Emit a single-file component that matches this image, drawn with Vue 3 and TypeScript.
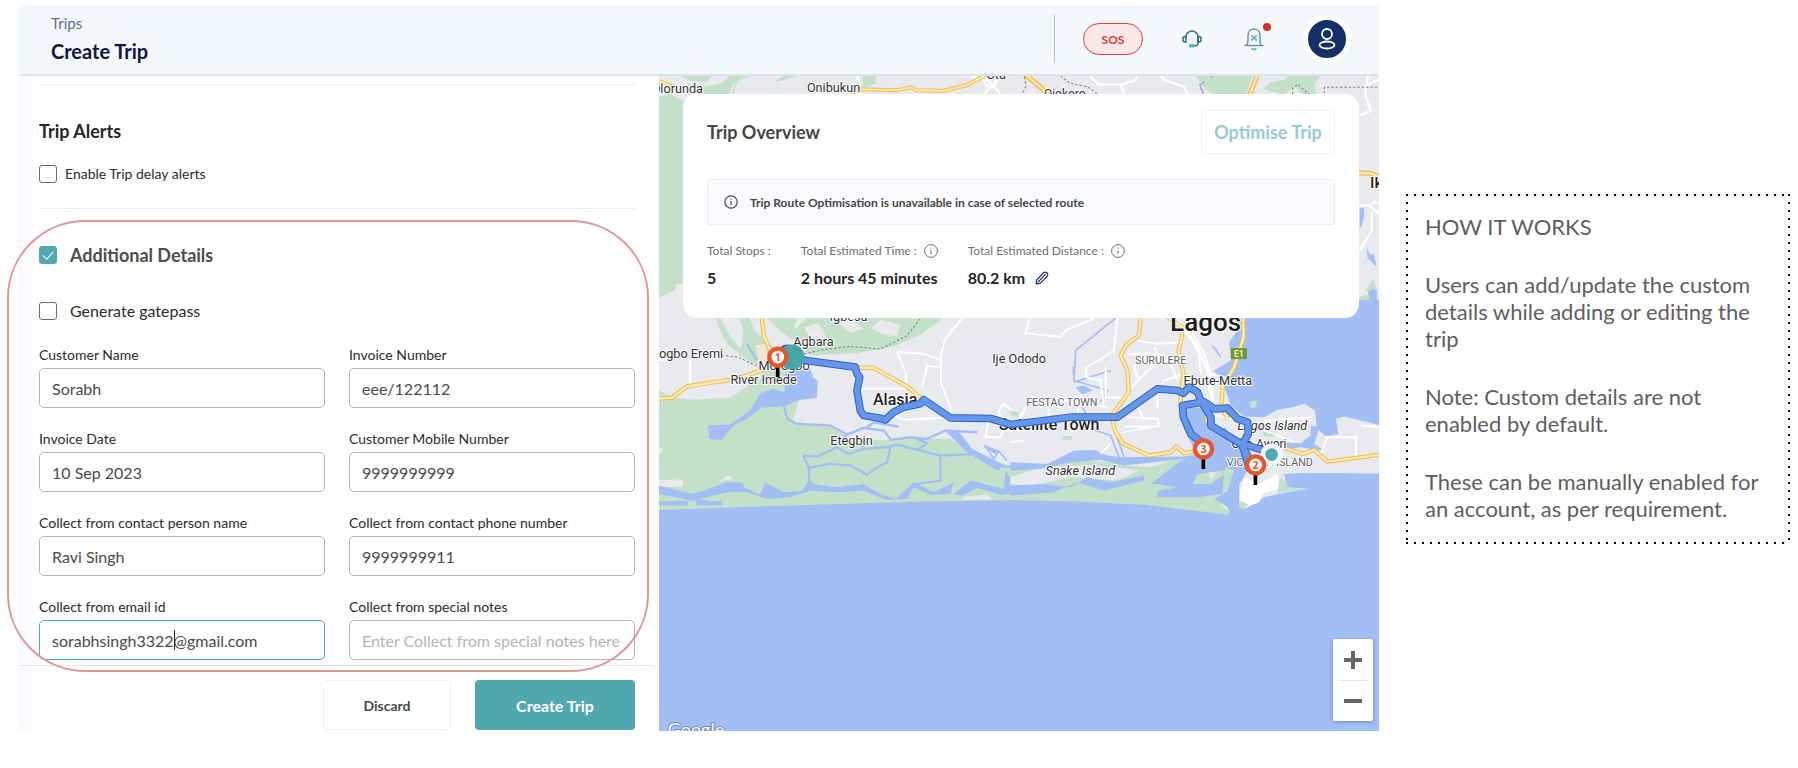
<script setup lang="ts">
import { reactive, ref } from 'vue'

interface Field {
  id: string
  label: string
  value: string
  type?: string
  placeholder?: string
  active?: boolean
}

interface MapLabel {
  text: string
  x: number
  y: number
  size: number
  kind?: string
}

interface Pin {
  n: number
  x: number
  y: number
}

const delayAlerts = ref(false)
const additional = ref(true)
const gatepass = ref(false)

const fields = reactive<Field[]>([
  { id: 'customer-name', label: 'Customer Name', value: 'Sorabh' },
  { id: 'invoice-number', label: 'Invoice Number', value: 'eee/122112' },
  { id: 'invoice-date', label: 'Invoice Date', value: '10 Sep 2023' },
  { id: 'customer-mobile', label: 'Customer Mobile Number', value: '9999999999', type: 'tel' },
  { id: 'contact-name', label: 'Collect from contact person name', value: 'Ravi Singh' },
  { id: 'contact-phone', label: 'Collect from contact phone number', value: '9999999911', type: 'tel' },
  { id: 'contact-email', label: 'Collect from email id', value: 'sorabhsingh3322@gmail.com', active: true },
  {
    id: 'special-notes',
    label: 'Collect from special notes',
    value: '',
    placeholder: 'Enter Collect from special notes here',
  },
])

const labels: MapLabel[] = [
  { text: 'Olorunda', x: -22, y: 52, size: 38 },
  { text: 'Onibukun', x: 443, y: 49, size: 38 },
  { text: 'Ota', x: 980, y: 8, size: 38 },
  { text: 'Ojokoro', x: 1153, y: 66, size: 36 },
  { text: 'Ikorodu', x: 2130, y: 336, size: 46, kind: 'strong' },
  { text: 'Igbesu', x: 511, y: 734, size: 38 },
  { text: 'Agbara', x: 402, y: 808, size: 38 },
  { text: 'ogbo Eremi', x: 0, y: 845, size: 38 },
  { text: 'Morogbo', x: 298, y: 880, size: 38 },
  { text: 'River Imede', x: 214, y: 923, size: 38 },
  { text: 'Etegbin', x: 513, y: 1106, size: 38 },
  { text: 'Alasia', x: 641, y: 984, size: 48, kind: 'strong' },
  { text: 'Ije Ododo', x: 998, y: 859, size: 38 },
  { text: 'Satellite Town', x: 1018, y: 1059, size: 48, kind: 'strong' },
  { text: 'FESTAC TOWN', x: 1100, y: 988, size: 32, kind: 'area' },
  { text: 'SURULERE', x: 1426, y: 864, size: 32, kind: 'area' },
  { text: 'Ebute-Metta', x: 1571, y: 927, size: 38 },
  { text: 'Lagos', x: 1531, y: 764, size: 78, kind: 'strong' },
  { text: 'Snake Island', x: 1158, y: 1195, size: 38, kind: 'isle' },
  { text: 'Lagos Island', x: 1733, y: 1059, size: 38, kind: 'isle' },
  { text: 'Oko-Awori', x: 1715, y: 1115, size: 36 },
  { text: 'VICTORIA ISLAND', x: 1701, y: 1169, size: 32, kind: 'area' },
]

const pins: Pin[] = [
  { n: 1, x: 356, y: 842 },
  { n: 2, x: 1787, y: 1165 },
  { n: 3, x: 1631, y: 1117 },
]

const route =
  'M423 850L588 872L593 892L601 902L593 942L603 1002L613 1017L663 1025L678 1030L703 1007L733 992L783 982L793 970L873 1024L993 1026L1053 1044L1113 1037L1233 1022L1373 1022L1493 937L1553 942L1571 950L1588 932L1613 947L1625 977L1653 1022L1653 1047L1743 1102L1770 1150'
const routeLoop =
  'M1628 1100L1593 1072L1571 1022L1568 987L1633 976L1663 997L1703 995L1733 1027L1763 1037L1765 1072L1748 1102L1813 1122L1835 1134'
</script>

<template>
  <div class="page">
    <div class="app">
      <header class="topbar">
        <div class="crumbs">
          <a class="crumb" href="#trips">Trips</a>
          <h1>Create Trip</h1>
        </div>
        <div class="actions">
          <button class="sos" type="button">SOS</button>
          <button class="icon-btn headset" type="button" aria-label="Support">
            <svg width="20" height="20" viewBox="0 0 20 20" fill="none" stroke="#2f6f85" stroke-width="1.5" stroke-linecap="round">
              <path d="M4 8a6 6 0 0 1 12 0v6c0 2-1.500 3-4 3" />
              <path d="M4 7.500H3a2 2 0 0 0-2 2v1.500a2 2 0 0 0 2 2h1zM16 7.500h1a2 2 0 0 1 2 2v1.500a2 2 0 0 1-2 2h-1z" />
              <rect x="7.500" y="15.800" width="4.500" height="2" rx="1" fill="#4fb3c6" stroke="#4fb3c6" />
            </svg>
          </button>
          <button class="icon-btn bell" type="button" aria-label="Notifications">
            <svg width="22" height="24" viewBox="0 0 22 24" fill="none" stroke="#6f8fae" stroke-width="1.500" stroke-linecap="round" stroke-linejoin="round">
              <path d="M2 18.500h18M4 18c1-1.500 1-3 1-5V8c0-3.500 2.500-6 6-6s6 2.500 6 6v5c0 2 0 3.500 1 5" />
              <path d="M8.700 8.500l4.600 4.600M13.300 8.500l-4.600 4.600M9 21.500c1 1.300 3 1.300 4 0" stroke="#4fb3c6" />
            </svg>
            <span class="badge"></span>
          </button>
          <button class="avatar" type="button" aria-label="Account">
            <svg width="20" height="24" viewBox="0 0 20 24" fill="none" stroke="#fff" stroke-width="1.800">
              <circle cx="10" cy="7" r="5" />
              <ellipse cx="10" cy="18" rx="7.500" ry="3.500" />
            </svg>
          </button>
        </div>
      </header>

      <main class="body">
        <form class="panel" @submit.prevent>
          <div class="fields-area">
            <section class="alerts">
              <h2>Trip Alerts</h2>
              <label class="check small">
                <input v-model="delayAlerts" type="checkbox" />
                <span>Enable Trip delay alerts</span>
              </label>
            </section>

            <section class="details">
              <div class="highlight"></div>
              <label class="check title">
                <input v-model="additional" type="checkbox" />
                <span>Additional Details</span>
              </label>
              <label class="check gate">
                <input v-model="gatepass" type="checkbox" />
                <span>Generate gatepass</span>
              </label>
              <div class="grid">
                <div v-for="f in fields" :key="f.id" class="field">
                  <label :for="f.id">{{ f.label }}</label>
                  <input
                    :id="f.id"
                    v-model="f.value"
                    :type="f.type ?? 'text'"
                    :placeholder="f.placeholder"
                    :class="{ active: f.active }"
                  />
                  <span v-if="f.active" class="caret"></span>
                </div>
              </div>
            </section>
          </div>
          <footer class="foot">
            <button class="discard" type="button">Discard</button>
            <button class="create" type="submit">Create Trip</button>
          </footer>
        </form>

        <section class="map" aria-label="Route map">
          <svg class="canvas" viewBox="0 0 2160 1962" preserveAspectRatio="xMinYMin slice">
            <rect width="2160" height="1962" fill="#e8eaed" />

            <!-- northern strip, above the overview card -->
            <g transform="translate(-27 -18)">
              <g fill="#c3e1c8">
                <path d="M27 80L60 72L100 92V640L80 640L75 660L27 682ZM90 18H185L170 36L120 32ZM130 72L165 50L215 40L235 18H300L250 40L235 72ZM370 36L400 18H440L400 30ZM636 18H676V40L650 52L636 50Z" />
              </g>
              <path d="M265 18L248 72" stroke="#c3e1c8" stroke-width="6" />
              <g fill="none" stroke="#fff" stroke-width="6">
                <path d="M620 18L630 40L622 55M960 18L1010 30L1050 72M1040 20L1030 45L1000 72M1000 30a20 20 0 1 0 40 0" />
              </g>
              <g fill="none" stroke="#f3bc4b" stroke-width="12">
                <path d="M27 33L70 50M590 72L630 58L740 61L780 52L800 61L880 62L950 45L1005 16M1122 14L1200 78" />
              </g>
              <g fill="none" stroke="#fdeab8" stroke-width="6">
                <path d="M27 33L70 50M590 72L630 58L740 61L780 52L800 61L880 62L950 45L1005 16M1122 14L1200 78" />
              </g>
              <path d="M1122 20L1126 50L1114 72" fill="none" stroke="#7a7d82" stroke-width="3" stroke-dasharray="8 6" />
            </g>
            <g transform="translate(1023 -18)">
              <g fill="#c3e1c8">
                <path d="M583 15H755L735 74H640L612 55ZM785 58L810 36L850 30L862 15H960L940 45L945 74H905L880 50L850 74ZM1116 625L1128 662L1093 662ZM1076 680L1110 672L1120 690L1100 700L1076 690Z" />
              </g>
              <g fill="none" stroke="#fff" stroke-width="7">
                <path d="M265 15L295 44L360 44L370 74M360 44L405 30L410 15M480 15L490 30L550 50L560 74M1100 18L1092 72L1109 122L1078 135M1135 28L1096 45M1076 405L1105 406L1120 395L1135 400M1105 406L1135 432M1112 425V480L1076 540" />
              </g>
              <g fill="#a2bff5">
                <path d="M1076 415L1088 412L1090 435L1080 472L1076 470ZM1096 530L1108 555L1118 550L1126 590L1112 575L1100 565ZM1100 665L1116 655L1128 662V690H1106ZM1076 690L1137 690V800H1076Z" />
                <path d="M628 18L635 22M612 36L597 44L608 72" fill="none" stroke="#7fa8f2" stroke-width="4" />
              </g>
              <g fill="none" stroke="#f3bc4b" stroke-width="15">
                <path d="M770 14L745 78M1070 308L1110 310L1140 322M76 14L130 60" />
              </g>
              <g fill="none" stroke="#fdeab8" stroke-width="7">
                <path d="M770 14L745 78M1070 308L1110 310L1140 322M76 14L130 60" />
              </g>
              <g fill="none" stroke="#7a7d82" stroke-width="3" stroke-dasharray="7 6">
                <path d="M180 18L208 40L260 50L292 72M875 72V55L890 43L926 74M970 70V52H1137" />
              </g>
            </g>

            <!-- western half: creeks and coast -->
            <g transform="translate(-27 702)">
              <g fill="#c3e1c8">
                <path d="M27 240L75 262L130 268L240 262L325 205L390 195L420 190L450 260L425 335L450 335L550 352L600 385L700 388L800 385L900 385L940 410L1000 430L1080 470L1130 500V600L27 600Z" />
                <path d="M195 24H335L350 90L385 130L345 175L300 155L235 105L215 70Z" />
                <path d="M350 24H880L810 72L730 108L620 128L480 135L440 95L400 70L370 40Z" />
                <path d="M330 180L420 170L430 200L350 205Z" />
              </g>
              <g fill="#e8eaed">
                <path d="M212 24H268L280 60L272 116L240 80ZM300 24L330 24L335 80L312 60ZM560 34L600 24L640 55L600 68ZM460 50L505 38L528 80L520 98L480 82ZM660 55L690 28L750 44L740 78L700 72ZM440 24L470 24L430 60ZM27 415L42 410L32 432L27 432ZM27 508L100 507L98 528L27 528ZM205 512L235 495L250 505ZM940 558L1010 552L1030 566L935 568Z" />
              </g>
              <path d="M315 105L345 100L360 165L330 160Z" fill="#f6e5d3" />
              <g fill="#a2bff5">
                <path d="M405 187L480 172L488 200L503 212L500 262L440 270L405 287L335 292L290 325L250 345L215 388L178 385L173 345L240 342L300 300L330 248L370 235L403 245Z" />
                <path d="M27 598L400 585L830 572L1140 568V1300H27ZM27 525L130 550L230 515L275 515L285 532L330 552L345 515L400 545L455 540L478 505L490 520L560 530L640 520L690 550L735 565L790 515L850 545L910 515L900 550L840 552L790 530L770 565L710 568L640 540L560 545L480 540L420 560L350 565L290 545L230 545L130 570L27 550ZM27 572L112 570L115 585L27 584ZM138 562L180 572L215 570V584L138 584ZM910 550L960 510L1060 535L1065 480L1110 550L1050 552L980 532L935 555ZM880 358L925 362L965 415L1060 465L1040 480L950 425ZM998 402L1045 420L1035 430L1005 415Z" />
              </g>
              <g fill="none" stroke="#a2bff5" stroke-width="7" stroke-linejoin="round">
                <path d="M400 285L412 325L440 340L540 345L590 372L640 352L700 360L722 388L780 380L830 385L885 360L980 365M478 520L475 470L460 436L500 438L560 410L595 430L640 415L710 410L740 402L800 418L830 398L800 385M475 472L540 460L600 465L650 492L690 465L710 455L720 410M740 402L870 435L980 430L1060 468H1110M870 435V510L800 520M650 352L670 335L745 348M290 100L320 150M590 372L555 405" />
                <path d="M1010 415L1030 445L1045 422L1070 450" stroke-width="5" />
              </g>
              <g fill="none" stroke="#fff" stroke-width="6" stroke-linejoin="round">
                <path d="M120 150V220M27 148L45 150M740 125L820 130L868 148M740 125L768 190L765 235M935 24L885 85L872 130V220L900 290V320L760 328L720 310M765 235H630M830 165L870 172M830 165L815 230M1110 320L1060 280L1045 300L1050 330M1015 325L1005 380H1050L1060 350L1110 360" />
              </g>
              <path d="M215 135L265 140L345 180M462 130L520 118L600 108L690 116L770 76L810 24" fill="none" stroke="#7a7d82" stroke-width="3" stroke-dasharray="7 6" />
              <g fill="none" stroke="#f3bc4b" stroke-width="13" stroke-linejoin="round">
                <path d="M335 24L342 80L370 140L340 178L260 205L110 228L65 262L27 264M620 172L670 172L770 228L815 265" />
              </g>
              <g fill="none" stroke="#fdeab8" stroke-width="7" stroke-linejoin="round">
                <path d="M335 24L342 80L370 140L340 178L260 205L110 228L65 262L27 264M620 172L670 172L770 228L815 265" />
              </g>
            </g>

            <!-- eastern half: Lagos and its lagoon -->
            <g transform="translate(1053 702)">
              <g fill="#c3e1c8">
                <path d="M0 462L100 462L200 448L300 455L345 465L420 470L480 450L540 445L625 475L665 470L660 530L615 562L658 612L400 590L180 574L0 570ZM157 376H183V388H157ZM0 300L25 305V320L0 318Z" />
              </g>
              <g fill="#e8eaed">
                <path d="M0 500L90 470L230 465L320 470L385 480L320 510L180 500L60 525L0 520ZM440 500L520 455L520 500L480 515ZM590 470L620 480L600 510ZM520 545L620 530L600 555Z" />
              </g>
              <g fill="#a2bff5">
                <path d="M590 -30H1110V345L1000 318L975 325L982 370L945 378L918 355L912 300L880 280L845 290L800 298L760 320L700 318L660 285L640 230L610 180L660 150L655 90L680 60Z" />
                <path d="M522 290L570 292L600 350L640 375L695 405L708 480L700 500L685 520L685 580L700 596L760 560L810 548L890 534L825 530L820 490L880 487L1110 489V1300H-10V568L180 572L400 582L655 612L650 590L610 565L650 540L668 480L630 462L560 445L540 395L518 350Z" />
                <path d="M0 455L110 460L190 420L250 418L290 435L330 440L520 438L560 430L660 455L640 480L560 490L545 520L600 520L640 490L635 550L560 560L440 560L440 540L500 530L440 520L420 520L490 465L520 445L340 465L270 448L180 455L90 475L0 480ZM0 525L100 520L180 530L230 500L300 515L400 495L400 510L280 540L200 515L130 545L0 555ZM195 230L220 225L245 240L215 252Z" />
                <path d="M820 395L870 398L898 375L900 345L925 350L910 400L940 420L900 415L870 410L820 415Z" />
              </g>
              <path d="M690 -30L680 30L672 70L640 115L600 110L560 20V-30Z" fill="#e8eaed" />
              <g fill="none" stroke="#a2bff5" stroke-width="5">
                <path d="M195 120L325 15M195 120L190 210L290 240L270 275M188 170V190M190 215L300 180M215 290L255 360L300 375L325 440M295 310L340 440M605 105L630 140M310 370L385 355M660 380L640 350" />
              </g>
              <path d="M718 272L738 270L735 290L720 294ZM755 365L795 362L790 378L760 378Z" fill="#c3e1c8" />
              <path d="M700 500L745 520L800 490L808 530L755 550L745 575L700 592L685 570L690 530Z" fill="#fff" />
              <path d="M806 500L828 515L830 532L885 534L800 546ZM685 568L712 582L700 596L685 592Z" fill="#c3e1c8" />
              <g fill="none" stroke="#fff" stroke-width="6" stroke-linejoin="round">
                <path d="M58 24L45 68L150 80L165 60L250 24M265 150L310 120L320 24M265 150L225 170L228 200L270 210L280 290M285 170V260L355 262M380 90L440 100L520 95M350 130L440 130L480 160L500 210M355 240L400 190L450 150L430 110M385 210L370 170L400 130M440 240L460 210L520 190M30 320L60 262L110 262L160 270L290 290M110 262L115 320M210 255L200 310M350 320L440 325L445 345L310 370M340 348H440M440 240V290M380 285L400 330M540 60L580 130L600 190L640 200L630 240M560 90L570 190M600 310L680 330L740 350L850 395M760 330L900 320M940 380H1035V440M1050 345L1107 350M930 430L950 378M760 470L790 460M600 260L590 210M0 395L40 390M270 430L300 400" />
              </g>
              <g fill="none" stroke="#fff" stroke-width="10" stroke-linejoin="round">
                <path d="M500 30L545 90L572 140L600 200L605 270" />
              </g>
              <g fill="none" stroke="#f3bc4b" stroke-width="13" stroke-linejoin="round">
                <path d="M390 24L385 75L345 105L330 135L350 180L354 245L305 312L310 355L335 398L415 435L480 425L497 408L520 428L560 420M470 20L515 50L512 90L503 120L518 190L508 280M697 10L698 80L670 170L635 230L632 285L650 325M588 300V335M820 412L875 430L910 418L950 453L1110 432" />
              </g>
              <g fill="none" stroke="#fdeab8" stroke-width="7" stroke-linejoin="round">
                <path d="M390 24L385 75L345 105L330 135L350 180L354 245L305 312L310 355L335 398L415 435L480 425L497 408L520 428L560 420M470 20L515 50L512 90L503 120L518 190L508 280M697 10L698 80L670 170L635 230L632 285L650 325M588 300V335M820 412L875 430L910 418L950 453L1110 432" />
              </g>
              <rect x="660" y="113" width="48" height="33" fill="#6f9a3c" />
              <text class="shield" x="684" y="139" text-anchor="middle">E1</text>
            </g>

            <text
              v-for="l in labels"
              :key="l.text"
              class="place"
              :class="l.kind"
              :x="l.x"
              :y="l.y"
              :font-size="l.size"
            >{{ l.text }}</text>

            <g fill="none" stroke-linejoin="round" stroke-linecap="round">
              <path :d="route" stroke="#2f62ad" stroke-width="23" />
              <path :d="routeLoop" stroke="#2f62ad" stroke-width="23" />
              <path d="M1748 1105L1768 1175" stroke="#2f62ad" stroke-width="23" />
              <path :d="route" stroke="#6596ee" stroke-width="17" />
              <path :d="routeLoop" stroke="#6596ee" stroke-width="17" />
              <path d="M1748 1105L1768 1175" stroke="#6596ee" stroke-width="17" />
            </g>

            <circle cx="385" cy="836" r="32" fill="#2f62ad" />
            <circle cx="398" cy="842" r="38" fill="#48a6a8" />
            <circle cx="1835" cy="1134" r="33" fill="#f0f8fa" />
            <circle cx="1835" cy="1134" r="19" fill="#52aab3" />

            <g v-for="p in pins" :key="p.n">
              <rect :x="p.x - 6" :y="p.y + 26" width="11" height="34" fill="#000" />
              <circle :cx="p.x" :cy="p.y" r="32" fill="#e4572e" />
              <circle :cx="p.x" :cy="p.y" r="19" fill="#fff" />
              <text class="pin-no" :x="p.x" :y="p.y + 11" text-anchor="middle">{{ p.n }}</text>
            </g>

            <text class="brand" x="26" y="1978">Google</text>
          </svg>

          <section class="card">
            <div class="card-head">
              <h2>Trip Overview</h2>
              <button class="optimise" type="button" disabled>Optimise Trip</button>
            </div>
            <p class="notice">
              <svg class="info" width="14" height="14" viewBox="0 0 14 14" fill="none" stroke="currentColor" stroke-width="1.200">
                <circle cx="7" cy="7" r="6.200" /><path d="M7 6.200v4M7 3.600v1.200" />
              </svg>
              <span>Trip Route Optimisation is unavailable in case of selected route</span>
            </p>
            <dl class="stats">
              <div>
                <dt>Total Stops :</dt>
                <dd>5</dd>
              </div>
              <div>
                <dt>
                  Total Estimated Time :
                  <svg class="info" width="14" height="14" viewBox="0 0 14 14" fill="none" stroke="currentColor">
                    <circle cx="7" cy="7" r="6.400" /><path d="M7 6.200v4M7 3.600v1.200" />
                  </svg>
                </dt>
                <dd>2 hours 45 minutes</dd>
              </div>
              <div>
                <dt>
                  Total Estimated Distance :
                  <svg class="info" width="14" height="14" viewBox="0 0 14 14" fill="none" stroke="currentColor">
                    <circle cx="7" cy="7" r="6.400" /><path d="M7 6.200v4M7 3.600v1.200" />
                  </svg>
                </dt>
                <dd>
                  80.2 km
                  <button class="edit" type="button" aria-label="Edit distance">
                    <svg width="14" height="14" viewBox="0 0 14 14" fill="none" stroke="#26305f" stroke-width="1.200" stroke-linejoin="round">
                      <path d="M1.200 12.800L1.600 9.200L8.200 2Q10 .3 11.800 1.700Q13.600 3.300 12 5.300L5.200 12.400ZM3.200 11L10.300 3.400" stroke-linecap="round" />
                    </svg>
                  </button>
                </dd>
              </div>
            </dl>
          </section>

          <div class="zoom">
            <button type="button" aria-label="Zoom in">
              <svg width="20" height="20" viewBox="0 0 20 20"><path d="M10 1v18M1 10h18" stroke="#666" stroke-width="4" /></svg>
            </button>
            <button type="button" aria-label="Zoom out">
              <svg width="20" height="20" viewBox="0 0 20 20"><path d="M1 10h18" stroke="#666" stroke-width="4" /></svg>
            </button>
          </div>
        </section>
      </main>
    </div>

    <aside class="note">
      <p>HOW IT WORKS</p>
      <p>Users can add/update the custom details while adding or editing the trip</p>
      <p>Note: Custom details are not enabled by default.</p>
      <p>These can be manually enabled for an account, as per requirement.</p>
    </aside>
  </div>
</template>

<style>
body {
  background: #fff;
}
</style>

<style scoped>
.page {
  display: grid;
  grid-template-columns: minmax(0, 1360fr) minmax(0, 384fr);
  gap: 27px;
  align-items: start;
  padding: 5px 8px 0 19px;
  font-family: Lato, 'Liberation Sans', sans-serif;
  color: #2b2b2b;
}
.page * {
  box-sizing: border-box;
}
h1,
h2,
p,
dl,
dd {
  margin: 0;
}
button,
input {
  font-family: inherit;
}
button {
  padding: 0;
  border: 0;
  background: none;
}

.topbar {
  display: flex;
  align-items: flex-start;
  justify-content: space-between;
  height: 71px;
  padding: 8px 28px 0 32px;
  background: #f4f8fa;
  border-bottom: 2px solid #dbe5f1;
}
.crumb {
  display: block;
  margin-bottom: 6px;
  font-size: 15px;
  line-height: 20px;
  color: #5f7192;
  text-decoration: none;
}
h1 {
  font-size: 20px;
  line-height: 24px;
  color: #0d1740;
}
.actions {
  display: flex;
  align-items: center;
  gap: 36px;
  height: 48px;
  margin-top: 2px;
  padding-left: 28px;
  border-left: 1px solid #b4c4d8;
}
.sos {
  width: 60px;
  height: 32px;
  border: 1px solid #d9433b;
  border-radius: 16px;
  background: #fce8e8;
  color: #cf3b34;
  font-size: 12px;
  font-weight: 700;
}
.icon-btn {
  position: relative;
  display: flex;
  justify-content: center;
  width: 26px;
}
.badge {
  position: absolute;
  top: -4px;
  right: -4px;
  width: 8px;
  height: 8px;
  border-radius: 50%;
  background: #cf3226;
}
.avatar {
  display: flex;
  align-items: center;
  justify-content: center;
  width: 48px;
  height: 48px;
  border: 5px solid #fff;
  border-radius: 50%;
  background: #152e66;
}

.crumbs,
.alerts h2 {
  white-space: nowrap;
}
.body {
  display: grid;
  grid-template-columns: minmax(0, 640fr) minmax(0, 720fr);
}
.panel {
  display: flex;
  flex-direction: column;
  background: linear-gradient(90deg, #f9faff, #fff 20px);
}
.fields-area {
  flex: 1;
  padding: 8px 24px 5px 20px;
}
.alerts {
  padding: 34px 0 25px;
  border-top: 1px solid #ececec;
  border-bottom: 1px solid #ececec;
}
h2 {
  font-size: 18px;
  line-height: 24px;
  color: #262626;
}
.check {
  display: flex;
  align-items: center;
  width: fit-content;
}
.check input {
  flex: none;
  width: 18px;
  height: 18px;
  margin: 0;
  border: 1px solid #6b6b6b;
  border-radius: 3px;
  appearance: none;
  background: #fff;
}
.check input:checked {
  border-color: #52a8b0;
  background: #52a8b0;
}
.check input:checked::after {
  content: '';
  display: block;
  width: 5px;
  height: 9px;
  margin: 2px 0 0 5px;
  border: solid #fff;
  border-width: 0 1px 1px 0;
  transform: rotate(42deg);
}
.small {
  gap: 8px;
  margin-top: 22px;
  font-size: 14px;
  line-height: 18px;
}
.title,
.gate {
  gap: 13px;
  font-size: 16px;
  line-height: 24px;
}
.title {
  font-size: 18px;
  font-weight: 700;
  color: #4c4c4c;
}
.gate {
  margin-top: 32px;
}
.details {
  position: relative;
  padding-top: 34px;
}
.highlight {
  position: absolute;
  z-index: 2;
  top: 11px;
  right: -14px;
  bottom: -12px;
  left: -32px;
  border: 2px solid #df9696;
  border-radius: 78px;
  pointer-events: none;
}
.grid {
  display: grid;
  grid-template-columns: repeat(2, minmax(0, 1fr));
  gap: 22px 24px;
  margin-top: 23px;
}
.field {
  position: relative;
}
.field label {
  display: block;
  margin-bottom: 4px;
  font-size: 14px;
  line-height: 18px;
}
.field input {
  display: block;
  width: 100%;
  height: 40px;
  padding: 0 12px;
  border: 1px solid #b5b5b5;
  border-radius: 5px;
  outline: none;
  background: #fff;
  color: #4a4a4a;
  font-size: 16px;
}
.field input::placeholder {
  color: #b4b4b4;
}
.field input.active {
  border-color: #52a8b0;
}
.caret {
  position: absolute;
  bottom: 10px;
  left: 135px;
  width: 1px;
  height: 20px;
  background: #222;
}
.foot {
  display: flex;
  justify-content: flex-end;
  gap: 24px;
  padding: 14px 24px 1px;
  border-top: 1px solid #e4e5e8;
  border-top-right-radius: 8px;
}
.foot button {
  height: 50px;
  border-radius: 4px;
  font-weight: 700;
}
.discard {
  width: 128px;
  border: 1px solid #f0f0f0;
  background: #fff;
  color: #4a4a4a;
  font-size: 14px;
}
.create {
  width: 160px;
  background: #52a8b0;
  color: #fff;
  font-size: 16px;
}

.map {
  position: relative;
  overflow: hidden;
  font-family: Roboto, 'Liberation Sans', sans-serif;
}
.canvas {
  position: absolute;
  inset: 0;
  width: 100%;
  height: 100%;
}
.place {
  fill: #2e3033;
  stroke: #fff;
  stroke-width: 6px;
  stroke-linejoin: round;
  paint-order: stroke;
}
.strong {
  font-weight: 500;
  fill: #1b1c1e;
}
.area {
  fill: #5c6066;
}
.isle {
  font-style: italic;
}
.shield {
  fill: #f7f3a0;
  font-size: 26px;
  font-weight: 700;
}
.pin-no {
  fill: #e4572e;
  font-family: 'Open Sans', sans-serif;
  font-size: 32px;
  font-weight: 700;
}
.brand {
  fill: #fff;
  stroke: #7187b5;
  stroke-width: 6px;
  paint-order: stroke;
  font-family: Lato, sans-serif;
  font-size: 54px;
}

.card {
  position: absolute;
  top: 18px;
  right: 20px;
  left: 24px;
  padding: 16px 24px 29px;
  border-radius: 14px;
  background: #fff;
  font-family: Lato, 'Liberation Sans', sans-serif;
}
.card-head {
  display: flex;
  align-items: center;
  justify-content: space-between;
}
.card h2 {
  color: #454545;
}
.optimise {
  width: 134px;
  height: 44px;
  border: 1px solid #efefef;
  border-radius: 5px;
  background: #fff;
  color: #96ccd0;
  font-size: 18px;
  font-weight: 700;
}
.notice {
  display: flex;
  align-items: center;
  gap: 12px;
  height: 46px;
  margin-top: 25px;
  padding: 0 16px;
  border: 1px solid #ececf1;
  border-radius: 3px;
  background: #fafaff;
  color: #454545;
  font-size: 12px;
  font-weight: 700;
}
.stats {
  display: flex;
  gap: 30px;
  margin-top: 16px;
}
dt {
  display: flex;
  align-items: center;
  gap: 7px;
  color: #6e6e6e;
  font-size: 12px;
  line-height: 20px;
}
dd {
  display: flex;
  align-items: center;
  gap: 10px;
  margin-top: 6px;
  color: #232323;
  font-size: 16px;
  font-weight: 700;
  line-height: 22px;
}
.edit,
.edit svg {
  display: block;
}

.zoom {
  position: absolute;
  right: 6px;
  bottom: 10px;
  width: 40px;
  padding: 0 5px;
  border-radius: 2px;
  background: #fff;
  box-shadow: 0 1px 4px rgba(0, 0, 0, 0.3);
}
.zoom button {
  display: flex;
  align-items: center;
  justify-content: center;
  width: 100%;
  height: 41px;
}
.zoom button + button {
  border-top: 1px solid #e6e6e6;
}

.note {
  display: flex;
  flex-direction: column;
  gap: 31px;
  margin-top: 189px;
  padding: 19px 12px 22px 19px;
  background:
    repeating-linear-gradient(90deg, #000 0 2px, transparent 2px 8px) top / 100% 2px no-repeat,
    repeating-linear-gradient(90deg, #000 0 2px, transparent 2px 8px) bottom / 100% 2px no-repeat,
    repeating-linear-gradient(180deg, #000 0 2px, transparent 2px 8px) left / 2px 100% no-repeat,
    repeating-linear-gradient(180deg, #000 0 2px, transparent 2px 8px) right / 2px 100% no-repeat;
  color: #5e5e5e;
  font-size: 22px;
  line-height: 27px;
}
</style>
